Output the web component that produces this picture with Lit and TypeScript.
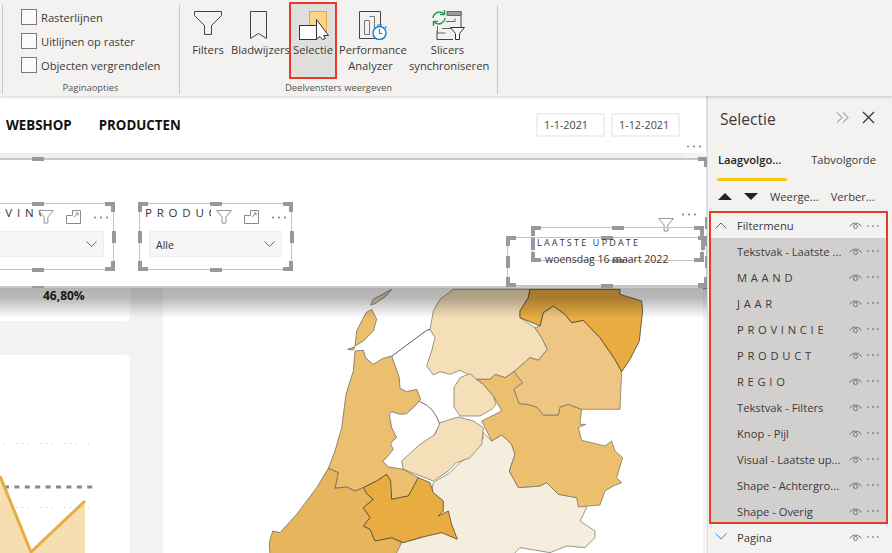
import { LitElement, html, css, svg } from 'lit';
import { customElement } from 'lit/decorators.js';

const layers = [
  'Tekstvak - Laatste ...',
  'M A A N D',
  'J A A R',
  'P R O V I N C I E',
  'P R O D U C T',
  'R E G I O',
  'Tekstvak - Filters',
  'Knop - Pijl',
  'Visual - Laatste up...',
  'Shape - Achtergro...',
  'Shape - Overig',
];

const funnel = html`<svg viewBox="0 0 17 15" width="16" height="14"><path d="M.5.5h16l-6 7v6.500h-4V7.500z" fill="#fff" stroke="#8a8a8a"/></svg>`;
const focus = html`<svg viewBox="0 0 15 14" width="15" height="14" fill="none" stroke="#8a8a8a"><path d="M.5 5.500V13.500H14.500V.5H6.500V5.500zM8 7l4-4M9.500 3H12V5.500"/></svg>`;
const dots = html`<svg viewBox="0 0 16 3" width="16" height="3" fill="#8a8a8a"><circle cx="2" cy="1.500" r="1.100"/><circle cx="8" cy="1.500" r="1.100"/><circle cx="14" cy="1.500" r="1.100"/></svg>`;
const chevron = html`<svg viewBox="0 0 11 6" width="11" height="6" fill="none" stroke="#666"><path d="M.5.5l5 5 5-5"/></svg>`;
const eye = html`<svg viewBox="0 0 13 9" width="13" height="9" fill="none" stroke="#666" stroke-width=".9"><path d="M.7 5.500C3 1 10 1 12.300 5.500"/><circle cx="6.500" cy="5.500" r="2"/></svg>`;
const rowDots = html`<svg viewBox="0 0 12 2" width="12" height="2" fill="#555"><circle cx="1.200" cy="1" r=".8"/><circle cx="6" cy="1" r=".8"/><circle cx="10.800" cy="1" r=".8"/></svg>`;

const handles = html`
  <i class="c tl"></i><i class="c tr"></i><i class="c bl"></i><i class="c br"></i>
  <i class="m t"></i><i class="m b"></i><i class="m l"></i><i class="m r"></i>
`;

// map regions, coordinates read off the reference at 3x
const map = svg`
  <g transform="translate(260 280) scale(.3333)" stroke="#6b6457" stroke-width="2.200" stroke-linejoin="round">
    <path fill="#ecbf6e" d="M285 195L290 150 318 95 335 85 350 115 340 150 310 180z"/>
    <path fill="#ecbf6e" d="M263 205L285 197 280 207z"/>
    <path fill="#e3d3ad" d="M332 72L340 55 395 25 378 45 345 68z"/>
    <path fill="none" stroke="#5f5a50" stroke-width="3" d="M395 226L500 148 512 145"/>
    <path fill="none" stroke="#4c4c4c" stroke-width="2.500" d="M478 362C510 372 530 400 540 432L525 458"/>
    <path fill="#ecbf6e" d="M285 210L310 208 318 232 340 250 370 232 395 225 418 290 420 322 440 332 470 325 482 355 465 375 440 398 420 400 395 392 388 400 395 440 410 470 398 480 392 490 400 505 380 530 368 540 385 558 430 565 475 590 460 620 445 645 395 655 390 605 380 580 350 600 310 620 285 630 260 618 225 622 235 575 205 562 225 510 245 440 258 340 280 270z"/>
    <path fill="#e8b55f" d="M205 562L235 575 225 622 260 618 285 630 310 620 322 640 340 655 310 680 330 710 310 735 330 745 345 780 395 770 425 785 410 825H30L28 785 38 750 60 755 110 700 170 620z"/>
  </g>
  <g transform="translate(440 280) scale(.3333)" stroke="#77705f" stroke-width="2.200" stroke-linejoin="round">
    <path fill="#f5eede" d="M-135 825L-115 785-55 770-20 605 30 575 60 545 100 515 130 470 125 450 155 480 185 462 215 490 225 520 208 570 235 620 300 615 320 605 355 640 410 650 440 680 420 720 465 750 465 770 435 800 380 795 330 815 240 800 215 825z"/>
    <path fill="#e8ac41" stroke="#4a3c20" d="M-230 620L-190 600-160 580-148 600-145 655-95 645-65 590-30 605-20 635 10 660 10 690-5 705 25 690 35 730 52 775 5 755-60 770-110 785-145 770-195 780-210 745-230 735-210 710-230 680-200 655-218 640z"/>
    <path fill="#f5dfb8" d="M40 25H270L265 50 240 90 240 110 285 140 305 170 322 205 295 238 270 230 222 272 195 290 165 280 150 295 110 295 80 278 60 268 30 280 0 272-20 282-40 255-25 210-15 170-30 145-20 90 0 55z"/>
    <path fill="#f5dfb8" d="M42 320L60 290 90 278 110 295 130 310 160 345 168 370 155 385 120 405 60 405 42 378z"/>
    <path fill="#f5dfb8" d="M0 425L55 408 100 420 130 440 125 490 90 530 50 545 25 570-20 600-110 565-115 540-60 490-15 460z"/>
    <path fill="#ecbf6e" d="M110 295L150 295 165 280 195 290 222 272 248 305 222 325 238 368 262 370 290 378 310 402 355 402 360 378 385 370 425 385 420 430 438 430 415 440 425 478 495 495 515 480 525 510 548 530 530 590 545 605 520 615 495 630 480 672 415 678 410 650 355 640 320 605 300 615 235 620 208 570 225 520 215 490 185 462 155 480 125 420 185 390 160 345 130 310z"/>
    <path fill="#efc583" d="M222 272L270 230 295 238 322 205 305 170 285 140 300 135 310 95 340 75 375 100 395 125 430 118 480 170 525 235 545 272 540 385 425 385 385 370 360 378 355 402 310 402 290 378 262 370 238 368 222 325 248 305z"/>
    <path fill="#e8ac41" stroke="#3f3722" d="M270 25H540L540 40 605 60 608 90 598 180 570 235 545 272 525 235 480 170 430 118 395 125 375 100 340 75 310 95 300 135 240 110 240 90 265 50z"/>
  </g>
`;

@customElement('app-root')
export class AppRoot extends LitElement {
  static styles = css`
    :host {
      display: block;
      position: relative;
      width: 892px;
      height: 553px;
      overflow: hidden;
      background: #fff;
      color: #3b3a39;
      font-family: 'Open Sans', 'Liberation Sans', sans-serif;
      font-size: 11.200px;
    }
    .ribbon {
      display: flex;
      position: relative;
      z-index: 3;
      box-sizing: border-box;
      height: 96px;
      padding: 2px 0 1px 2px;
      background: #f3f2f1;
      box-shadow: 0 1px 3px rgba(0, 0, 0, 0.2);
    }
    .group {
      display: flex;
      flex-direction: column;
      position: relative;
      box-sizing: border-box;
    }
    .group::before {
      content: '';
      position: absolute;
      left: 0;
      top: 3px;
      bottom: 1px;
      width: 1px;
      background: #c8c6c4;
    }
    .group.opts {
      width: 177px;
      padding: 3px 0 0 19px;
    }
    .group.panes {
      width: 319px;
    }
    .group.panes::after {
      content: '';
      position: absolute;
      right: 0;
      top: 3px;
      bottom: 1px;
      width: 1px;
      background: #c8c6c4;
    }
    .group-label {
      margin-top: auto;
      text-align: center;
      font-size: 9.400px;
      line-height: 14px;
      color: #55534f;
    }
    .group.opts .group-label {
      margin-left: -19px;
    }
    .check {
      display: flex;
      align-items: center;
      gap: 4px;
      height: 24px;
    }
    .box {
      box-sizing: border-box;
      width: 16px;
      height: 16px;
      border: 1px solid #7a7a7a;
      background: #fafafa;
    }
    .buttons {
      display: flex;
      align-items: flex-start;
      padding-left: 10px;
    }
    .btn {
      box-sizing: border-box;
      height: 77px;
      border: 2px solid transparent;
      padding-top: 3px;
      text-align: center;
      line-height: 16px;
      white-space: nowrap;
    }
    .btn svg {
      display: block;
      margin: 0 auto 2px;
    }
    .btn.perf svg {
      margin-left: 20px;
    }
    .btn.on {
      border-color: #e63b25;
      background: #e1dfdd;
    }
    .main {
      display: flex;
      height: 457px;
    }
    .canvas {
      position: relative;
      width: 707px;
      overflow: hidden;
      background: #f3f3f3;
    }
    .head {
      display: flex;
      align-items: center;
      box-sizing: border-box;
      height: 57px;
      padding: 1px 26px 0 6px;
      background: #fff;
      border-right: 1px solid #ddd;
    }
    .title {
      margin-right: 27px;
      font-size: 13.300px;
      font-weight: 700;
      color: #111;
    }
    .date {
      box-sizing: border-box;
      width: 69px;
      height: 24px;
      margin-left: 6px;
      padding-left: 6px;
      border: 2px solid #f0f0f0;
      line-height: 20px;
      font-size: 10.800px;
      color: #444;
    }
    .date.first {
      margin-left: auto;
    }
    .head-dots {
      position: absolute;
      right: 5px;
      top: 48px;
      line-height: 0;
    }
    .ledge {
      height: 5px;
      margin-right: 25px;
      background: #eeeeee;
    }
    .filter {
      position: relative;
      box-sizing: border-box;
      height: 130px;
      background: #fff;
      border-top: 2px solid #c8c8c8;
      border-bottom: 2px solid #c8c8c8;
      border-right: 1px solid #ddd;
    }
    .visual {
      position: absolute;
      box-sizing: border-box;
      border: 1.500px solid #c4c4c4;
    }
    .visual.frame {
      border-color: transparent;
    }
    .c {
      position: absolute;
      box-sizing: border-box;
      width: 10px;
      height: 10px;
      border: 0 solid #999;
    }
    .tl { left: -2px; top: -2px; border-width: 4px 0 0 4px; }
    .tr { right: -2px; top: -2px; border-width: 4px 4px 0 0; }
    .bl { left: -2px; bottom: -2px; border-width: 0 0 4px 4px; }
    .br { right: -2px; bottom: -2px; border-width: 0 4px 4px 0; }
    .m {
      position: absolute;
      background: #999;
    }
    .t, .b { left: calc(50% - 6px); width: 12px; height: 4px; }
    .t { top: -2.500px; }
    .b { bottom: -2.500px; }
    .l, .r { top: calc(50% - 6px); width: 4px; height: 12px; }
    .l { left: -2.500px; }
    .r { right: -2.500px; }
    .slicer-title {
      position: absolute;
      top: 1px;
      overflow: hidden;
      white-space: nowrap;
      font-size: 11.500px;
      letter-spacing: 0.900px;
      color: #333;
    }
    .tools {
      position: absolute;
      right: 4px;
      top: 6px;
      display: flex;
      align-items: center;
      gap: 12px;
    }
    .drop {
      position: absolute;
      right: 9px;
      top: 27px;
      display: flex;
      align-items: center;
      justify-content: space-between;
      box-sizing: border-box;
      height: 26px;
      padding: 0 6px;
      border: 1px solid #eee;
      background: #f6f6f6;
      font-size: 10.500px;
      color: #333;
    }
    .drop span {
      padding-top: 2px;
    }
    .over {
      position: absolute;
      white-space: nowrap;
      color: #333;
      line-height: 14px;
    }
    .over.icon {
      line-height: 0;
    }
    .report {
      display: flex;
      position: relative;
      height: 266px;
    }
    .cards {
      display: flex;
      flex-direction: column;
      width: 163px;
      padding-right: 33px;
      box-sizing: border-box;
    }
    .kpi {
      height: 33px;
      background: #fff;
      border-radius: 0 0 5px 0;
      padding-left: 43px;
      line-height: 15px;
      font-weight: 700;
      font-size: 12px;
      color: #252423;
    }
    .chart {
      flex: 1;
      margin-top: 34px;
      background: #fff;
      border-radius: 0 5px 0 0;
      line-height: 0;
    }
    .mapcard {
      width: 540px;
      background: #fff;
      line-height: 0;
    }
    .shade {
      position: absolute;
      left: 0;
      right: 0;
      top: 0;
      height: 30px;
      pointer-events: none;
      background: linear-gradient(rgba(0, 0, 0, 0.3), rgba(0, 0, 0, 0.27) 35%, rgba(0, 0, 0, 0));
    }
    .pane {
      box-sizing: border-box;
      width: 185px;
      padding-left: 1px;
      background: #f3f2f1;
      border-left: 1px solid #dcdcdc;
    }
    .pane-head {
      display: flex;
      align-items: center;
      height: 46px;
      padding: 0 17px 0 11px;
    }
    .pane-title {
      font-size: 15.600px;
      font-weight: 500;
      margin-right: auto;
    }
    .pane-head svg {
      margin-bottom: 3px;
    }
    .pane-head svg.close {
      margin-left: 13px;
    }
    .tabs {
      display: flex;
      justify-content: space-between;
      height: 39px;
      padding: 10px 16px 0 9px;
      box-sizing: border-box;
      line-height: 16px;
    }
    .tab.on {
      position: relative;
      font-weight: 600;
      color: #252423;
    }
    .tab.on::after {
      content: '';
      position: absolute;
      left: -1px;
      right: -6px;
      top: 26px;
      height: 3px;
      border-radius: 2px;
      background: #f2c811;
    }
    .tools-row {
      display: flex;
      align-items: center;
      height: 30px;
      padding-left: 9px;
    }
    .tools-row svg {
      margin-right: 12px;
    }
    .tools-row span {
      margin-right: 12px;
    }
    .red {
      display: flex;
      flex-direction: column;
      box-sizing: border-box;
      width: 179px;
      height: 313px;
      border: 2px solid #e63b25;
      overflow: hidden;
    }
    .row {
      display: flex;
      align-items: center;
      flex: none;
      height: 26px;
      padding-left: 26px;
      padding-right: 7px;
      position: relative;
      white-space: nowrap;
    }
    .row.top {
      height: 25px;
    }
    .row .name {
      margin-right: auto;
    }
    .row .name.caps {
      letter-spacing: 0.4px;
    }
    .row .eye {
      margin-right: 5px;
      line-height: 0;
    }
    .row .more {
      line-height: 0;
      margin-top: -2px;
    }
    .row .arrow {
      position: absolute;
      left: 4px;
      top: 9px;
      line-height: 0;
    }
    .list {
      background: #d2d0ce;
    }
    .outer-row {
      width: 179px;
      box-sizing: border-box;
      padding-left: 28px;
      padding-right: 9px;
    }
    .outer-row .arrow {
      left: 6px;
    }
  `;

  visual(x: number, y: number, w: number, h: number, inner: unknown, frame = false) {
    return html`<div
      class="visual ${frame ? 'frame' : ''}"
      style="left:${x}px;top:${y}px;width:${w}px;height:${h}px"
    >
      ${handles}${inner}
    </div>`;
  }

  slicer(title: string, titleWidth: number, value: string, dropLeft: number) {
    return html`
      <div class="slicer-title" style="left:5px;width:${titleWidth}px">${title}</div>
      <div class="tools">${funnel}${focus}${dots}</div>
      <div class="drop" style="left:${dropLeft}px">
        <span>${value}</span>${chevron}
      </div>
    `;
  }

  render() {
    const row = (name: string) => html`
      <div class="row">
        <span class="name ${name[1] === ' ' ? 'caps' : ''}">${name}</span>
        <span class="eye">${eye}</span><span class="more">${rowDots}</span>
      </div>
    `;
    return html`
      <div class="ribbon">
        <div class="group opts">
          <div class="check"><span class="box"></span>Rasterlijnen</div>
          <div class="check"><span class="box"></span>Uitlijnen op raster</div>
          <div class="check"><span class="box"></span>Objecten vergrendelen</div>
          <div class="group-label">Paginaopties</div>
        </div>
        <div class="group panes">
          <div class="buttons">
            <div class="btn" style="width:38px">
              <svg width="28" height="33" viewBox="0 0 28 33" fill="none" stroke="#444"><path d="M.5 4.500h27v4l-10 10v9h-7v-9l-10-10z"/></svg>
              Filters
            </div>
            <div class="btn" style="width:59px;margin-left:2px">
              <svg width="17" height="33" viewBox="0 0 17 33" fill="none" stroke="#444"><path d="M.5 4.500h16v27l-8-5-8 5z"/></svg>
              Bladwijzers
            </div>
            <div class="btn on" style="width:48px;margin-left:1px">
              <svg width="32" height="33" viewBox="0 0 32 33">
                <rect x="12.500" y="4.500" width="17" height="20" fill="#fbd38a" stroke="#e8a33d"/>
                <rect x="2.500" y="18.500" width="17" height="14" fill="#fff" stroke="#333"/>
                <path d="M19.500 12.500l12 16h-5l2 3-3 1-2.500-3-3.500 2.500z" fill="#fff" stroke="#333"/>
              </svg>
              Selectie
            </div>
            <div class="btn perf" style="width:67px">
              <svg width="30" height="33" viewBox="0 0 30 33" fill="none" stroke="#444">
                <path d="M.5 4.500h21v27H.5z"/>
                <path d="M5.500 13.500h5v14h-5zM10.500 9.500h5v18" stroke="#777"/>
                <circle cx="20.500" cy="26" r="6.500" fill="#fff" stroke="#1b87d0" stroke-width="1.500"/>
                <path d="M20.500 22v4.500h3M18 18h5M26 19.500l1.500 1.500" stroke="#1b87d0" stroke-width="1.200"/>
              </svg>
              Performance<br />Analyzer
            </div>
            <div class="btn" style="width:81px;margin-left:3px">
              <svg width="34" height="33" viewBox="0 0 34 33" fill="none" stroke="#444">
                <path d="M16 4.500h14v20M6 24v8.500h16"/>
                <path d="M16 4.500h14v4H16z" fill="#9b9b9b" stroke="#666"/>
                <path d="M15 14.500h9v-3M11 21.500h10M6.500 19v7h8" stroke="#666"/>
                <path d="M2 11a6.500 6.500 0 0 1 11-4M14 11a6.500 6.500 0 0 1-11 4" stroke="#2a9a5a" stroke-width="1.500"/>
                <path d="M13.500 3v4.500H9M2.500 19v-4.500H7" stroke="#2a9a5a" stroke-width="1.500"/>
                <path d="M19.500 20.500h14l-5 6v6h-4v-6z" fill="#fff" stroke="#333"/>
              </svg>
              Slicers<br />synchroniseren
            </div>
          </div>
          <div class="group-label">Deelvensters weergeven</div>
        </div>
      </div>

      <div class="main">
        <div class="canvas">
          <div class="head">
            <span class="title">WEBSHOP</span>
            <span class="title">PRODUCTEN</span>
            <span class="date first">1-1-2021</span>
            <span class="date">1-12-2021</span>
            <span class="head-dots">${dots}</span>
          </div>
          <div class="ledge"></div>
          <div class="filter">
            ${this.visual(-631, -2, 1338, 130, '', true)}
            ${this.visual(-38, 43, 152, 67, this.slicer('P R O V I N C I E', 73, '', -20))}
            ${this.visual(139, 43, 153, 67, this.slicer('P R O D U C T', 66, 'Alle', 9))}
            <span class="over icon" style="right:32px;top:58px">${funnel}</span>
            <span class="over icon" style="right:9px;top:52px">${dots}</span>
            ${this.visual(532, 67, 171, 34, '')}
            ${this.visual(507, 77, 200, 49, '')}
            <span class="over" style="left:537px;top:76px;font-size:9px;letter-spacing:2.200px">LAATSTE UPDATE</span>
            <span class="over" style="left:545px;top:92px;font-size:10.500px">woensdag 16 maart 2022</span>
          </div>
          <div class="report">
            <div class="cards">
              <div class="kpi">46,80%</div>
              <div class="chart">
                <svg width="130" height="199" viewBox="0 354 130 199">
                  <path d="M0 475L31 551 85 500V553H0z" fill="#f5dfb0"/>
                  <path d="M4 442.500H93M4 506.500H93" stroke="#c9c9c9" stroke-dasharray="1 5" fill="none"/>
                  <path d="M4 486H93" stroke="#888" stroke-width="3" stroke-dasharray="5 5.400" fill="none"/>
                  <path d="M0 475L31 551 85 500" stroke="#e8ac41" stroke-width="3" fill="none"/>
                </svg>
              </div>
            </div>
            <div class="mapcard">
              <svg width="540" height="266" viewBox="163 287 540 266">${map}</svg>
            </div>
            <div class="shade"></div>
          </div>
        </div>

        <div class="pane">
          <div class="pane-head">
            <span class="pane-title">Selectie</span>
            <svg width="13" height="11" viewBox="0 0 13 11" fill="none" stroke="#6d7a8a"><path d="M1 .5l5 5-5 5M7 .5l5 5-5 5"/></svg>
            <svg class="close" width="13" height="13" viewBox="0 0 13 13" fill="none" stroke="#333" stroke-width="1.200"><path d="M1 1l11 11M12 1L1 12"/></svg>
          </div>
          <div class="tabs">
            <span class="tab on">Laagvolgo...</span>
            <span class="tab">Tabvolgorde</span>
          </div>
          <div class="tools-row">
            <svg width="14" height="7" viewBox="0 0 14 7" fill="#222"><path d="M7 0l7 7H0z"/></svg>
            <svg width="14" height="7" viewBox="0 0 14 7" fill="#222"><path d="M0 0h14L7 7z"/></svg>
            <span>Weerge...</span><span>Verber...</span>
          </div>
          <div class="red">
            <div class="row top">
              <span class="arrow"><svg width="12" height="7" viewBox="0 0 12 7" fill="none" stroke="#666"><path d="M.5 6.500L6 1l5.500 5.500"/></svg></span>
              <span class="name">Filtermenu</span>
              <span class="eye">${eye}</span><span class="more">${rowDots}</span>
            </div>
            <div class="list">${layers.map(row)}</div>
          </div>
          <div class="row outer-row">
            <span class="arrow"><svg width="12" height="7" viewBox="0 0 12 7" fill="none" stroke="#2b88d8"><path d="M.5.5L6 6l5.500-5.500"/></svg></span>
            <span class="name">Pagina</span>
            <span class="eye">${eye}</span><span class="more">${rowDots}</span>
          </div>
        </div>
      </div>
    `;
  }
}
